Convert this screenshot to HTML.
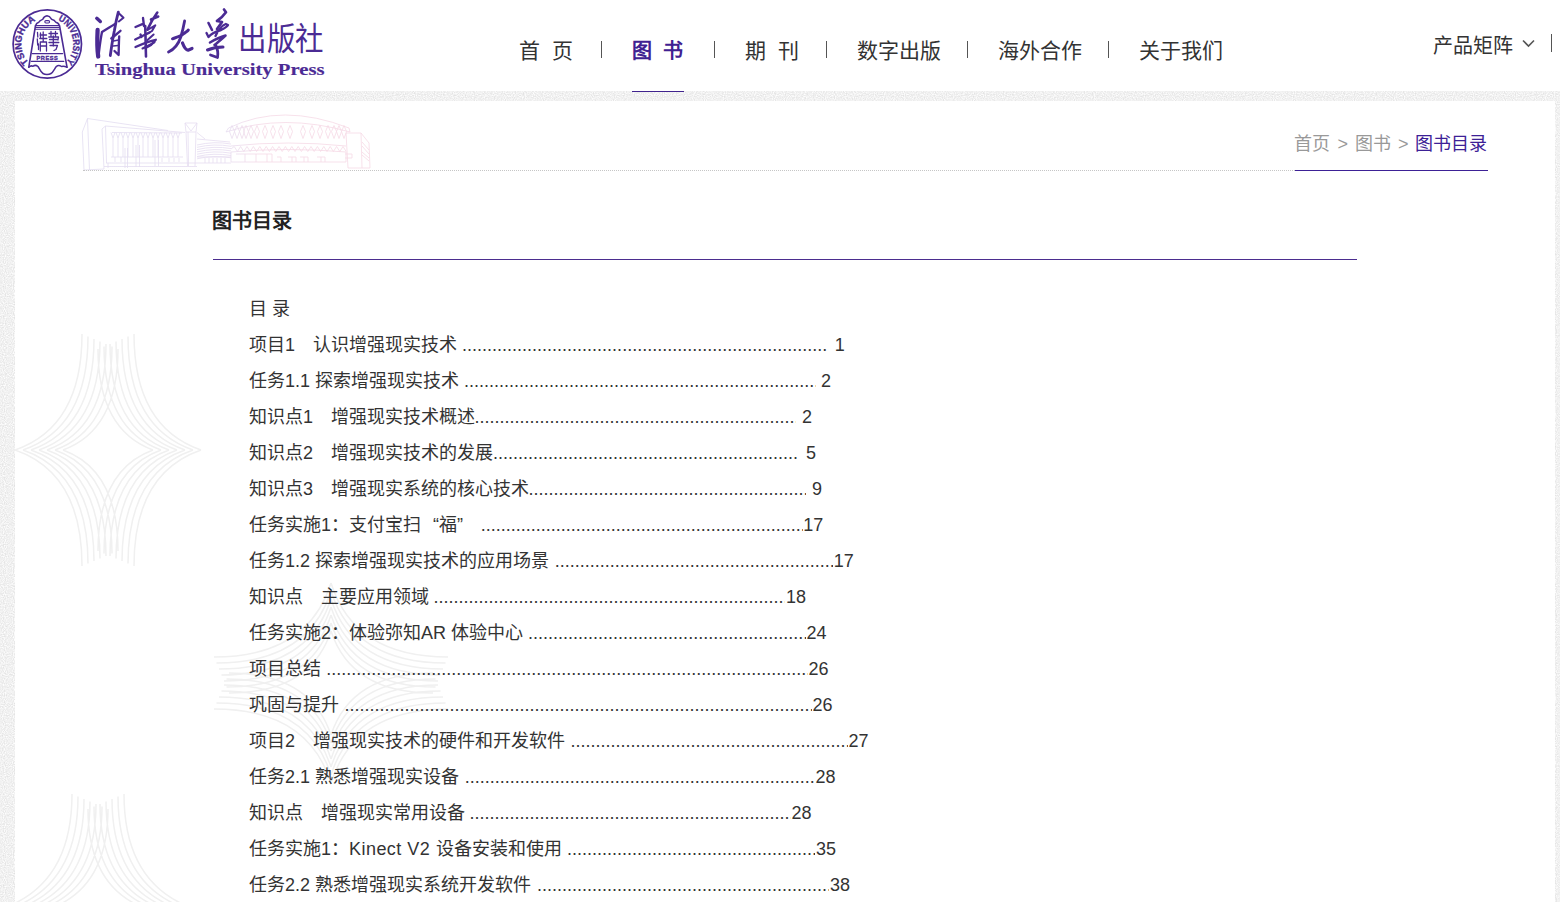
<!DOCTYPE html>
<html lang="zh-CN">
<head>
<meta charset="utf-8">
<title>图书目录</title>
<style>
html,body{margin:0;padding:0;}
body{width:1560px;height:902px;overflow:hidden;position:relative;background:#fff;font-family:"Liberation Sans",sans-serif;color:#333;}
.abs{position:absolute;white-space:nowrap;}
#hdr{position:absolute;left:0;top:0;width:1560px;height:91px;background:#fff;}
.nav{position:absolute;top:38px;font-size:21px;line-height:26px;color:#333;white-space:nowrap;}
.sep{position:absolute;top:41px;width:1px;height:17px;background:#555;}
#frame{position:absolute;left:0;top:91px;width:1560px;height:811px;background:#efefef;}
#box{position:absolute;left:15px;top:101px;width:1540px;height:801px;background:#fff;overflow:hidden;}
.bc{font-size:18px;line-height:24px;color:#999;}
.row{position:absolute;left:249px;font-size:18px;line-height:24px;color:#333;white-space:nowrap;}
.dots{position:absolute;font-size:18px;line-height:24px;color:#333;white-space:nowrap;overflow:hidden;}
.num{position:absolute;font-size:18px;line-height:24px;color:#333;white-space:nowrap;}
</style>
</head>
<body>
<div id="hdr">
  <svg class="abs" style="left:0;top:0" width="340" height="91" viewBox="0 0 340 91">
<defs><path id="arc" d="M47.3,70 A26,26 0 1 1 47.3,18 A26,26 0 1 1 47.3,70"/></defs>
<g fill="none" stroke="#4b2b94" stroke-linecap="round" stroke-linejoin="round">
<circle cx="47.3" cy="44" r="34.2" stroke-width="1.7"/>
<!-- bell top cloud -->
<path d="M35.8,25.3 C36,23.5 37.5,22.8 38.8,22.3 C39.5,20.5 41.5,19.8 42.8,19.3 C43.5,17.5 45,16 47,15.8 C49,16 50.5,17.5 51.5,19.2 C53,19.5 55,20.5 55.8,22.2 C57.2,22.5 58.8,23.5 59.2,25.3" stroke-width="1.5"/>
<rect x="44.8" y="20.6" width="4.8" height="2.4" rx="1.2" stroke-width="1.1"/>
<path d="M35.5,25.5 L59.5,25.5 M35.6,27.4 L59.4,27.4 M35.2,29.3 L59.8,29.3" stroke-width="1.1"/>
<path d="M35.5,25.5 L28.8,67.2 M59.5,25.5 L67,67.2" stroke-width="1.6"/>
<path d="M32.3,53.6 L62.6,53.6 M31.3,61.3 L63.8,61.3" stroke-width="1.3"/>
<path d="M28.8,67.2 C30,66 31.5,65.5 33,66.3 C34.5,65 36.5,65.3 38,66.5 C39.5,68.5 40.5,72 43,73.5 C45,74.8 49,74.8 51,73.5 C53.5,72 54.5,68.5 56.5,66.3 C58,65.2 60,65.5 61.5,66.5 C63.5,65.8 65.5,66.5 67,67.2" stroke-width="1.5"/>
<!-- seal chars -->
<path d="M37.5,32.5 L37.8,37 M37.3,39 L37.7,45 M38.5,44 L38.5,49.5 M40.5,33 L40.5,38 M40,35 L46.5,35 M39.8,38.5 L46.8,38.5 M43.2,32 L43.2,41.5 M40.3,42 L46.5,42 L46.5,51 M40.3,42 L40.3,51 M40.5,46 L46,46" stroke-width="1.3"/>
<path d="M49,33.5 L57.5,33.5 M51,31.5 L51,36 M55.5,31.5 L55.5,36 M48.8,37 L58.5,37 L58,40 M49.5,39.5 L57.5,39.5 M49,42.5 L58.8,42.5 M53.3,36 L53.3,46 M50,45.5 L57.5,45.5 L56,49.5 L54,50.5" stroke-width="1.3"/>
</g>
<g fill="#4b2b94" stroke="#4b2b94" stroke-width="0.35" font-family="Liberation Sans, sans-serif" font-weight="bold">
<text font-size="5.6" x="47.4" y="59.6" text-anchor="middle" letter-spacing="0.6">PRESS</text>
<text font-size="9.4"><textPath href="#arc" startOffset="20.4" textLength="49" lengthAdjust="spacingAndGlyphs">TSINGHUA</textPath></text>
<text font-size="9.4"><textPath href="#arc" startOffset="92" textLength="49.5" lengthAdjust="spacingAndGlyphs">UNIVERSITY</textPath></text>
</g>
<!-- calligraphy -->
<g fill="none" stroke="#4b2b94" stroke-linecap="round" stroke-linejoin="round">
<path d="M96.8,18.3 L100.3,21.5" stroke-width="3.47"/>
<path d="M97.6,30 C97.2,38 97,48 98.2,56.5" stroke-width="4.26"/>
<path d="M98.5,56 C99.5,48 100.3,40 102,32 C106,29.5 110,27 115,24" stroke-width="2.35"/>
<path d="M118.3,12.2 C117,17 115.5,24 114.3,31 C113,37 111.5,47 110.3,55.5" stroke-width="2.80"/>
<path d="M118.5,13 L123.5,17.8 L118.8,21.5" stroke-width="2.02"/>
<path d="M111.3,38.5 L120.5,30.8" stroke-width="2.35"/>
<path d="M119.2,36.5 C118.8,43 118.8,49 118.6,55 L114.5,51" stroke-width="2.35"/>
<path d="M113.5,41 L118.5,40 M113,46 L118,45.5" stroke-width="1.57"/>
<path d="M135.5,27 L143.5,23.6 M143,18 L144,26" stroke-width="2.35"/>
<path d="M157.3,12.5 C154,17 150.5,23 147.5,29.5 M158.2,16.5 L151,19.5" stroke-width="2.58"/>
<path d="M145.2,26 C145.6,36 145.7,47 146,56.5" stroke-width="2.58"/>
<path d="M147.5,30 L155.3,25.3 L152,31 L147.8,33.5 M153.6,34.5 L147.5,40" stroke-width="2.02"/>
<path d="M135.2,39.5 L149.5,32.5 M140.5,34.5 L141.5,37" stroke-width="2.35"/>
<path d="M135.5,47 C142,44 149,41 155.8,39.8 L151,45 L145.5,48" stroke-width="2.35"/>
<path d="M142.5,48.5 L154.5,42.3" stroke-width="2.02"/>
<path d="M172.5,38.8 C176,37.5 181,36.2 184,33.5 C186,32 187.8,31 188.3,30" stroke-width="3.02"/>
<path d="M184.6,21 C183.5,27 182,33 180.8,37 C178.8,43 175,49 168.5,52" stroke-width="2.80"/>
<path d="M182.5,43 C184,47 186,50 188,50.2 L192,48.5" stroke-width="3.25"/>
<path d="M224,9.5 L226,12.2 C224,15 222,18 217,21 L222,22 C220,25 218.5,27 217,29" stroke-width="2.69"/>
<path d="M208.5,23 L212,30" stroke-width="2.58"/>
<path d="M206.5,33 L208.5,37 C211,34 214,32 221,30 C224,28.5 227,27 228,25 L225.8,24 C222,25.5 219,28 215.5,36" stroke-width="2.35"/>
<path d="M210,42.5 C215,39.5 220,37 225.5,35.5 C222,39 218,42 214.5,45" stroke-width="2.58"/>
<path d="M207.5,50 C211,48.5 218,47 223,47" stroke-width="3.02"/>
<path d="M216,46 C217.5,49 218.5,52 217.5,57.5 L210.5,55" stroke-width="2.80"/>
</g>
<g fill="#4b2b94" font-family="Liberation Sans, sans-serif">
<text x="0" y="0" font-size="28.5" transform="translate(238,49.7) scale(1,1.1)">出版社</text>
</g>
<text x="95" y="75.3" font-family="Liberation Serif, serif" font-weight="bold" font-size="17" fill="#4b2b94" stroke="#4b2b94" stroke-width="0.15" textLength="229.5" lengthAdjust="spacingAndGlyphs">Tsinghua University Press</text>
</svg>

  <div class="nav" style="left:519px">首&nbsp;&nbsp;页</div>
  <div class="sep" style="left:601px"></div>
  <div class="nav" style="left:632px;top:38px;font-size:20px;color:#3f2191;font-weight:bold">图&nbsp;&nbsp;书</div>
  <div class="sep" style="left:714px"></div>
  <div class="nav" style="left:745px">期&nbsp;&nbsp;刊</div>
  <div class="sep" style="left:826px"></div>
  <div class="nav" style="left:857px">数字出版</div>
  <div class="sep" style="left:967px"></div>
  <div class="nav" style="left:998px">海外合作</div>
  <div class="sep" style="left:1108px"></div>
  <div class="nav" style="left:1139px">关于我们</div>
  <div class="nav" style="left:1433px;top:33px;font-size:20px">产品矩阵</div>
  <svg class="abs" style="left:1521px;top:38px" width="15" height="11" viewBox="0 0 15 11"><path d="M2,2.5 L7.5,8 L13,2.5" fill="none" stroke="#555" stroke-width="1.6"/></svg>
  <div class="sep" style="left:1551px;top:34px;height:18px"></div>
</div>
<svg class="abs" style="left:0;top:91px" width="1560" height="811" viewBox="0 0 1560 811"><defs><filter id="nz" x="0" y="0" width="100%" height="100%" color-interpolation-filters="sRGB"><feTurbulence type="fractalNoise" baseFrequency="0.9" numOctaves="1" seed="3" result="t"/><feColorMatrix in="t" type="matrix" values="0.2 0 0 0 0.845  0.2 0 0 0 0.845  0.2 0 0 0 0.845  0 0 0 0 1"/></filter></defs><rect width="1560" height="811" fill="#fff" filter="url(#nz)"/></svg>
<div id="box"></div>
<svg class="abs" style="left:15px;top:101px" width="1540" height="801" viewBox="15 101 1540 801"><path d="M82.0,334.0 Q82.0,426.8 15.0,450.0 M88.0,336.5 Q88.0,427.3 23.0,450.0 M94.0,339.0 Q94.0,427.8 31.0,450.0 M100.0,341.5 Q100.0,428.3 39.0,450.0 M106.0,344.0 Q106.0,428.8 47.0,450.0 M112.0,346.5 Q112.0,429.3 55.0,450.0 M118.0,349.0 Q118.0,429.8 63.0,450.0 M82.0,566.0 Q82.0,473.2 15.0,450.0 M88.0,563.5 Q88.0,472.7 23.0,450.0 M94.0,561.0 Q94.0,472.2 31.0,450.0 M100.0,558.5 Q100.0,471.7 39.0,450.0 M106.0,556.0 Q106.0,471.2 47.0,450.0 M112.0,553.5 Q112.0,470.7 55.0,450.0 M118.0,551.0 Q118.0,470.2 63.0,450.0 M134.0,334.0 Q134.0,426.8 201.0,450.0 M128.0,336.5 Q128.0,427.3 193.0,450.0 M122.0,339.0 Q122.0,427.8 185.0,450.0 M116.0,341.5 Q116.0,428.3 177.0,450.0 M110.0,344.0 Q110.0,428.8 169.0,450.0 M104.0,346.5 Q104.0,429.3 161.0,450.0 M98.0,349.0 Q98.0,429.8 153.0,450.0 M134.0,566.0 Q134.0,473.2 201.0,450.0 M128.0,563.5 Q128.0,472.7 193.0,450.0 M122.0,561.0 Q122.0,472.2 185.0,450.0 M116.0,558.5 Q116.0,471.7 177.0,450.0 M110.0,556.0 Q110.0,471.2 169.0,450.0 M104.0,553.5 Q104.0,470.7 161.0,450.0 M98.0,551.0 Q98.0,470.2 153.0,450.0 M214.0,657.0 Q307.6,657.0 331.0,583.0 M216.5,663.0 Q308.1,663.0 331.0,591.0 M219.0,669.0 Q308.6,669.0 331.0,599.0 M221.5,675.0 Q309.1,675.0 331.0,607.0 M224.0,681.0 Q309.6,681.0 331.0,615.0 M226.5,687.0 Q310.1,687.0 331.0,623.0 M229.0,693.0 Q310.6,693.0 331.0,631.0 M448.0,657.0 Q354.4,657.0 331.0,583.0 M445.5,663.0 Q353.9,663.0 331.0,591.0 M443.0,669.0 Q353.4,669.0 331.0,599.0 M440.5,675.0 Q352.9,675.0 331.0,607.0 M438.0,681.0 Q352.4,681.0 331.0,615.0 M435.5,687.0 Q351.9,687.0 331.0,623.0 M433.0,693.0 Q351.4,693.0 331.0,631.0 M214.0,709.0 Q307.6,709.0 331.0,783.0 M216.5,703.0 Q308.1,703.0 331.0,775.0 M219.0,697.0 Q308.6,697.0 331.0,767.0 M221.5,691.0 Q309.1,691.0 331.0,759.0 M224.0,685.0 Q309.6,685.0 331.0,751.0 M226.5,679.0 Q310.1,679.0 331.0,743.0 M229.0,673.0 Q310.6,673.0 331.0,735.0 M448.0,709.0 Q354.4,709.0 331.0,783.0 M445.5,703.0 Q353.9,703.0 331.0,775.0 M443.0,697.0 Q353.4,697.0 331.0,767.0 M440.5,691.0 Q352.9,691.0 331.0,759.0 M438.0,685.0 Q352.4,685.0 331.0,751.0 M435.5,679.0 Q351.9,679.0 331.0,743.0 M433.0,673.0 Q351.4,673.0 331.0,735.0 M72.0,794.0 Q72.0,886.8 -2.0,910.0 M78.0,796.5 Q78.0,887.3 6.0,910.0 M84.0,799.0 Q84.0,887.8 14.0,910.0 M90.0,801.5 Q90.0,888.3 22.0,910.0 M96.0,804.0 Q96.0,888.8 30.0,910.0 M102.0,806.5 Q102.0,889.3 38.0,910.0 M108.0,809.0 Q108.0,889.8 46.0,910.0 M72.0,1026.0 Q72.0,933.2 -2.0,910.0 M78.0,1023.5 Q78.0,932.7 6.0,910.0 M84.0,1021.0 Q84.0,932.2 14.0,910.0 M90.0,1018.5 Q90.0,931.7 22.0,910.0 M96.0,1016.0 Q96.0,931.2 30.0,910.0 M102.0,1013.5 Q102.0,930.7 38.0,910.0 M108.0,1011.0 Q108.0,930.2 46.0,910.0 M124.0,794.0 Q124.0,886.8 198.0,910.0 M118.0,796.5 Q118.0,887.3 190.0,910.0 M112.0,799.0 Q112.0,887.8 182.0,910.0 M106.0,801.5 Q106.0,888.3 174.0,910.0 M100.0,804.0 Q100.0,888.8 166.0,910.0 M94.0,806.5 Q94.0,889.3 158.0,910.0 M88.0,809.0 Q88.0,889.8 150.0,910.0 M124.0,1026.0 Q124.0,933.2 198.0,910.0 M118.0,1023.5 Q118.0,932.7 190.0,910.0 M112.0,1021.0 Q112.0,932.2 182.0,910.0 M106.0,1018.5 Q106.0,931.7 174.0,910.0 M100.0,1016.0 Q100.0,931.2 166.0,910.0 M94.0,1013.5 Q94.0,930.7 158.0,910.0 M88.0,1011.0 Q88.0,930.2 150.0,910.0 " fill="none" stroke="#f0f0f0" stroke-width="1.5"/></svg>
<div class="abs" style="left:632px;top:91px;width:52px;height:1px;background:#40238e"></div>

<svg class="abs" style="left:0;top:0" width="400" height="175" viewBox="0 0 400 175">
<defs><linearGradient id="bg" gradientUnits="userSpaceOnUse" x1="82" y1="0" x2="370" y2="0"><stop offset="0" stop-color="#e2ddf1"/><stop offset="0.5" stop-color="#e6dcf0"/><stop offset="0.62" stop-color="#f5d9e6"/><stop offset="1" stop-color="#f6d9e5"/></linearGradient></defs>
<g fill="none" stroke="url(#bg)" stroke-width="0.8">
<path d="M82.3,132 L87.5,118.5 L168,130.5 M82.3,132 L84,170 M87.5,118.5 L89.5,170 M84,170 L104,169"/>
<path d="M102,129 L105.5,126 L185,132.5 M102,129 L104,169 M105.5,126 L106.5,163 M106,163 L197,163 M104,166.5 L197,166.5 M108,163 L108,168"/>
<path d="M111,132.5 L113,138 L115,132.5 M113,138 L113,157 M116,132.5 L118,138 L120,132.5 M118,138 L118,157 M121,132.5 L123,138 L125,132.5 M123,138 L123,157 M126,132.5 L128,138 L130,132.5 M128,138 L128,157 M131,132.5 L133,138 L135,132.5 M133,138 L133,157 M136,132.5 L138,138 L140,132.5 M138,138 L138,157 M141,132.5 L143,138 L145,132.5 M143,138 L143,157 M146,132.5 L148,138 L150,132.5 M148,138 L148,157 M151,132.5 L153,138 L155,132.5 M153,138 L153,157 M156,132.5 L158,138 L160,132.5 M158,138 L158,157 M161,132.5 L163,138 L165,132.5 M163,138 L163,157 M166,132.5 L168,138 L170,132.5 M168,138 L168,157 M171,132.5 L173,138 L175,132.5 M173,138 L173,157 M176,132.5 L178,138 L180,132.5 M178,138 L178,157 "/>
<path d="M111,157 L183,157 M112,132.5 L182,133 M125,148 L125,168 M127.5,148 L127.5,168 M136,145 L136,167 M139.5,145 L139.5,167 M155,140 L155,166 M158.5,140 L158.5,166 M190,147 M115,162 L115,157 M121,162 L121,157 M162,162 L162,158 M169,162 L169,158 M174,162 L174,158 M179,162 L179,158"/>
<path d="M185,123 L197,123 L196,132 L186,132 Z M185,123 L191,131 L197,123 M186,132 L187.5,166 M196,132 L195,166 M188,132 L188.5,166"/>
<path d="M197,132.5 L205,139 M197,139 L230,142 M197,157 L231,157 M197,163 L231,163 M197,145.0 Q214,141.0 231,144.0 M197,147.3 Q214,143.3 231,146.3 M197,149.6 Q214,145.6 231,148.6 M197,151.9 Q214,147.9 231,150.9 M197,154.2 Q214,150.2 231,153.2 M197,156.5 Q214,152.5 231,155.5 M197,158.8 Q214,154.8 231,157.8 "/>
<path d="M205,158 L205,163 M209,158 L209,163 M213,158 L213,163 M217,158 L217,163 M221,158 L221,163 M225,158 L225,163"/>
<path d="M228.5,128 Q282,102 349,128 M226,132 Q284,113 350,132 M228.5,128 L226,132 M349,128 L350,132"/>
<path d="M232,125.5 L234.5,131.5 L232,138.5 L229.5,131.5 Z M237,125.5 L239.5,131.5 L237,138.5 L234.5,131.5 Z M242,125.5 L244.5,131.5 L242,138.5 L239.5,131.5 Z M246,125.5 L248.5,131.5 L246,138.5 L243.5,131.5 Z M251,125.5 L253.5,131.5 L251,138.5 L248.5,131.5 Z M257,125.5 L259.5,131.5 L257,138.5 L254.5,131.5 Z M265,125.5 L267.5,131.5 L265,138.5 L262.5,131.5 Z M273,125.5 L275.5,131.5 L273,138.5 L270.5,131.5 Z M281,125.5 L283.5,131.5 L281,138.5 L278.5,131.5 Z M290,125.5 L292.5,131.5 L290,138.5 L287.5,131.5 Z M303,125.5 L305.5,131.5 L303,138.5 L300.5,131.5 Z M312,125.5 L314.5,131.5 L312,138.5 L309.5,131.5 Z M320,125.5 L322.5,131.5 L320,138.5 L317.5,131.5 Z M328,125.5 L330.5,131.5 L328,138.5 L325.5,131.5 Z M334,125.5 L336.5,131.5 L334,138.5 L331.5,131.5 Z M339,125.5 L341.5,131.5 L339,138.5 L336.5,131.5 Z M344,125.5 L346.5,131.5 L344,138.5 L341.5,131.5 Z "/>
<path d="M231,146 Q288,140 346,146 M231,152 Q288,147 346,152 M231,149 L234.2,146.5 L237.4,151.5 L240.6,146.5 L243.8,151.5 L247.0,146.5 L250.2,151.5 L253.4,146.5 L256.6,151.5 L259.8,146.5 L263.0,151.5 L266.2,146.5 L269.4,151.5 L272.6,146.5 L275.8,151.5 L279.0,146.5 L282.2,151.5 L285.4,146.5 L288.6,151.5 L291.8,146.5 L295.0,151.5 L298.2,146.5 L301.4,151.5 L304.6,146.5 L307.8,151.5 L311.0,146.5 L314.2,151.5 L317.4,146.5 L320.6,151.5 L323.8,146.5 L327.0,151.5 L330.2,146.5 L333.4,151.5 L336.6,146.5 L339.8,151.5 L343.0,146.5 L346.2,151.5 "/>
<path d="M231,152 L231,162 M346,152 L346,162 M231,162 L346,162 M236,154 L272,154 L272,162 M245,154 L245,162 M256,154 L256,162 M267,154 L267,162 M277,157 L281,157 L281,162 M288,157 L296,157 L296,162 M292,157 L292,162 M300,157 L308,157 L308,162 M304,157 L304,162 M317,157 L325,157 L325,162 M321,157 L321,162"/>
<path d="M346,133 L361,133 L369,143 L370,168 L348,168 L346,133 M361,133 L362,168 M362,142 L369,150 M362,146 L369,154 M362,152 L369,158 M362,155 L369,161 M345,154 L352,154 L352,158 L345,158"/>
</g></svg>
<div class="abs" style="left:83px;top:170px;width:1212px;height:0;border-top:1px dotted #c6c6c6"></div>
<div class="abs" style="left:1295px;top:170px;width:193px;height:1px;background:#3d2196"></div>
<div class="abs bc" style="left:1294px;top:132px">首页</div>
<div class="abs bc" style="left:1337.5px;top:132px">&gt;</div>
<div class="abs bc" style="left:1354.5px;top:132px">图书</div>
<div class="abs bc" style="left:1398px;top:132px">&gt;</div>
<div class="abs bc" style="left:1415px;top:132px;color:#3d2196">图书目录</div>
<div class="abs" style="left:212px;top:207px;font-size:20px;line-height:28px;font-weight:bold;color:#222">图书目录</div>
<div class="abs" style="left:213px;top:259px;width:1144px;height:1px;background:#4b2d8f"></div>
<div class="row" style="top:297px">目 录</div>
<div class="row" style="top:333px">项目1　认识增强现实技术</div>
<div class="dots" style="top:333px;left:462.1px;width:366.1px">........................................................................................................................</div>
<div class="num" style="top:333px;left:834.7px">1</div>
<div class="row" style="top:369px">任务1.1 探索增强现实技术</div>
<div class="dots" style="top:369px;left:464.1px;width:351.8px">........................................................................................................................</div>
<div class="num" style="top:369px;left:821px">2</div>
<div class="row" style="top:405px">知识点1　增强现实技术概述</div>
<div class="dots" style="top:405px;left:474.4px;width:321.9px">........................................................................................................................</div>
<div class="num" style="top:405px;left:802px">2</div>
<div class="row" style="top:441px">知识点2　增强现实技术的发展</div>
<div class="dots" style="top:441px;left:492.9px;width:306.6px">........................................................................................................................</div>
<div class="num" style="top:441px;left:806px">5</div>
<div class="row" style="top:477px">知识点3　增强现实系统的核心技术</div>
<div class="dots" style="top:477px;left:528.5px;width:277.8px">........................................................................................................................</div>
<div class="num" style="top:477px;left:812px">9</div>
<div class="row" style="top:513px">任务实施1：支付宝扫<span style="display:inline-block;width:18px;text-align:right">“</span>福<span style="display:inline-block;width:18px;text-align:left">”</span></div>
<div class="dots" style="top:513px;left:480.8px;width:322.0px">........................................................................................................................</div>
<div class="num" style="top:513px;left:803.3px">17</div>
<div class="row" style="top:549px">任务1.2 探索增强现实技术的应用场景</div>
<div class="dots" style="top:549px;left:554.7px;width:278.6px">........................................................................................................................</div>
<div class="num" style="top:549px;left:833.8px">17</div>
<div class="row" style="top:585px">知识点　主要应用领域</div>
<div class="dots" style="top:585px;left:433.5px;width:351.9px">........................................................................................................................</div>
<div class="num" style="top:585px;left:785.9px">18</div>
<div class="row" style="top:621px">任务实施2：体验弥知AR 体验中心</div>
<div class="dots" style="top:621px;left:528.1px;width:277.9px">........................................................................................................................</div>
<div class="num" style="top:621px;left:806.5px">24</div>
<div class="row" style="top:657px">项目总结</div>
<div class="dots" style="top:657px;left:326.2px;width:481.8px">........................................................................................................................</div>
<div class="num" style="top:657px;left:808.5px">26</div>
<div class="row" style="top:693px">巩固与提升</div>
<div class="dots" style="top:693px;left:344.4px;width:467.5px">........................................................................................................................</div>
<div class="num" style="top:693px;left:812.4px">26</div>
<div class="row" style="top:729px">项目2　增强现实技术的硬件和开发软件</div>
<div class="dots" style="top:729px;left:570.5px;width:277.5px">........................................................................................................................</div>
<div class="num" style="top:729px;left:848.5px">27</div>
<div class="row" style="top:765px">任务2.1 熟悉增强现实设备</div>
<div class="dots" style="top:765px;left:464.7px;width:350.3px">........................................................................................................................</div>
<div class="num" style="top:765px;left:815.5px">28</div>
<div class="row" style="top:801px">知识点　增强现实常用设备</div>
<div class="dots" style="top:801px;left:469.5px;width:321.5px">........................................................................................................................</div>
<div class="num" style="top:801px;left:791.5px">28</div>
<div class="row" style="top:837px">任务实施1：<span style="letter-spacing:0.45px">Kinect V2 </span>设备安装和使用</div>
<div class="dots" style="top:837px;left:566.9px;width:248.6px">........................................................................................................................</div>
<div class="num" style="top:837px;left:816px">35</div>
<div class="row" style="top:873px">任务2.2 熟悉增强现实系统开发软件</div>
<div class="dots" style="top:873px;left:536.9px;width:292.6px">........................................................................................................................</div>
<div class="num" style="top:873px;left:830px">38</div>
</body>
</html>
